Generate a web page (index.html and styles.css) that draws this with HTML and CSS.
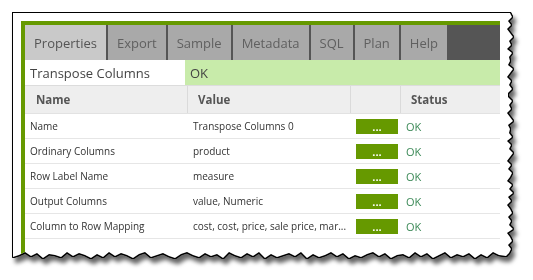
FILE: index.html
```html
<!DOCTYPE html>
<html lang="en">
<head>
    <meta charset="UTF-8">
    <title>Transpose Columns - Properties</title>
    <link rel="stylesheet" href="styles.css">
</head>
<body>
    <div class="shot">
        <div class="paper">
            <div class="window">
                <div class="tabs">
                    <div class="tab active">Properties</div>
                    <div class="tab">Export</div>
                    <div class="tab">Sample</div>
                    <div class="tab">Metadata</div>
                    <div class="tab">SQL</div>
                    <div class="tab">Plan</div>
                    <div class="tab">Help</div>
                </div>
                <div class="title-row">
                    <div class="step-name">Transpose Columns</div>
                    <div class="step-status">OK</div>
                </div>
                <div class="grid head">
                    <div class="cell">Name</div>
                    <div class="cell">Value</div>
                    <div class="cell"></div>
                    <div class="cell">Status</div>
                </div>
                <div class="grid row">
                    <div class="cell">Name</div>
                    <div class="cell">Transpose Columns 0</div>
                    <div class="cell"><button class="more">...</button></div>
                    <div class="cell ok">OK</div>
                </div>
                <div class="grid row">
                    <div class="cell">Ordinary Columns</div>
                    <div class="cell">product</div>
                    <div class="cell"><button class="more">...</button></div>
                    <div class="cell ok">OK</div>
                </div>
                <div class="grid row">
                    <div class="cell">Row Label Name</div>
                    <div class="cell">measure</div>
                    <div class="cell"><button class="more">...</button></div>
                    <div class="cell ok">OK</div>
                </div>
                <div class="grid row">
                    <div class="cell">Output Columns</div>
                    <div class="cell">value, Numeric</div>
                    <div class="cell"><button class="more">...</button></div>
                    <div class="cell ok">OK</div>
                </div>
                <div class="grid row">
                    <div class="cell">Column to Row Mapping</div>
                    <div class="cell">cost, cost, price, sale price, mar...</div>
                    <div class="cell"><button class="more">...</button></div>
                    <div class="cell ok">OK</div>
                </div>
            </div>
        </div>
    </div>
</body>
</html>
```

FILE: styles.css
```css
body {
    margin: 0;
    padding: 13px;
    background: #fff;
    font-family: 'Open Sans', 'DejaVu Sans', sans-serif;
}

/* torn paper look: black outline + soft shadow */
.shot {
    width: 500px;
    filter: drop-shadow(1px 0 0 #000) drop-shadow(-1px 0 0 #000) drop-shadow(0 1px 0 #000) drop-shadow(0 -1px 0 #000) drop-shadow(3px 5px 2px rgba(0, 0, 0, 0.6));
}

.paper {
    width: 500px;
    height: 246px;
    box-sizing: border-box;
    padding: 8px 0 0 8px;
    background: #fff;
    clip-path: polygon(0 0, 497px 0,
        499px 4px, 495px 8px, 498px 12px, 494px 16px, 497px 20px, 500px 24px, 496px 28px, 498px 32px, 494px 36px, 499px 40px,
        496px 44px, 497px 48px, 495px 52px, 500px 56px, 497px 60px, 494px 64px, 498px 68px, 496px 72px, 499px 76px, 495px 80px,
        495px 84px, 499px 88px, 496px 92px, 498px 96px, 494px 100px, 497px 104px, 500px 108px, 495px 112px, 497px 116px, 496px 120px,
        499px 124px, 494px 128px, 498px 132px, 496px 136px, 500px 140px, 497px 144px, 494px 148px, 498px 152px, 495px 156px, 499px 160px,
        497px 164px, 494px 168px, 499px 172px, 496px 176px, 500px 180px, 495px 184px, 498px 188px, 494px 192px, 497px 196px, 499px 200px,
        495px 204px, 498px 208px, 496px 212px, 500px 216px, 494px 220px, 497px 224px, 499px 228px, 495px 232px, 498px 236px, 496px 240px,
        493px 243px,
        486px 242px, 480px 239px, 474px 244px, 468px 241px, 462px 245px, 456px 240px, 450px 243px, 444px 241px, 438px 244px, 432px 239px,
        426px 242px, 420px 245px, 414px 240px, 408px 243px, 402px 239px, 396px 244px, 390px 241px, 384px 242px, 378px 245px, 372px 240px,
        366px 243px, 360px 239px, 354px 241px, 348px 244px, 342px 242px, 336px 245px, 330px 240px, 324px 243px, 318px 239px, 312px 242px,
        306px 244px, 300px 241px, 294px 245px, 288px 239px, 282px 243px, 276px 240px, 270px 242px, 264px 244px, 258px 241px, 252px 245px,
        246px 239px, 240px 243px, 234px 240px, 228px 244px, 222px 242px, 216px 239px, 210px 245px, 204px 241px, 198px 243px, 192px 240px,
        186px 244px, 180px 242px, 174px 239px, 168px 241px, 162px 245px, 156px 243px, 150px 240px, 144px 242px, 138px 244px, 132px 239px,
        126px 241px, 120px 245px, 114px 242px, 108px 240px, 102px 243px, 96px 239px, 90px 244px, 84px 241px, 78px 245px, 72px 242px,
        66px 240px, 60px 243px, 54px 239px, 48px 244px, 42px 242px, 36px 241px, 30px 245px, 24px 240px, 18px 243px, 12px 239px,
        6px 242px, 0 244px);
}

.window {
    width: 479px;
    height: 100%;
    box-sizing: border-box;
    border-left: 4px solid #669900;
    border-top: 4px solid #669900;
}

.tabs {
    display: flex;
    gap: 2px;
    height: 35px;
    background: #555;
}

.tab {
    display: flex;
    align-items: center;
    padding: 0 9px;
    background: #a9a9a9;
    color: #606060;
    font-size: 13px;
}

.tab.active {
    background: #c9c9c9;
    color: #555;
}

.title-row {
    display: flex;
    height: 25px;
    border-bottom: 1px solid #dcdcdc;
    font-size: 13px;
    color: #444;
}

.step-name {
    width: 160px;
    padding-left: 5px;
    box-sizing: border-box;
    background: #fff;
    display: flex;
    align-items: center;
}

.step-status {
    flex: 1;
    padding-left: 5px;
    background: #c8ebaa;
    display: flex;
    align-items: center;
}

.grid {
    display: grid;
    grid-template-columns: 163px 163px 50px 1fr;
}

.cell {
    display: flex;
    align-items: center;
    white-space: nowrap;
    overflow: hidden;
}

.head {
    height: 27px;
    background: #eee;
    border-bottom: 1px solid #e2e2e2;
    font-size: 11.5px;
    font-weight: bold;
    color: #555;
}

.head .cell {
    padding-left: 10px;
    border-right: 1px solid #dadada;
}

.head .cell:first-child {
    padding-left: 11px;
}

.head .cell:last-child {
    border-right: none;
}

.row {
    height: 24px;
    border-bottom: 1px solid #e6e6e6;
    font-size: 10px;
    color: #333;
}

.row .cell {
    padding-left: 5px;
}

.more {
    width: 42px;
    height: 15px;
    padding: 0;
    border: none;
    background: #669900;
    color: #fff;
    font-family: inherit;
    font-size: 11px;
    font-weight: bold;
    line-height: 13px;
}

.ok {
    color: #3d8a58;
    font-size: 11px;
}
```
